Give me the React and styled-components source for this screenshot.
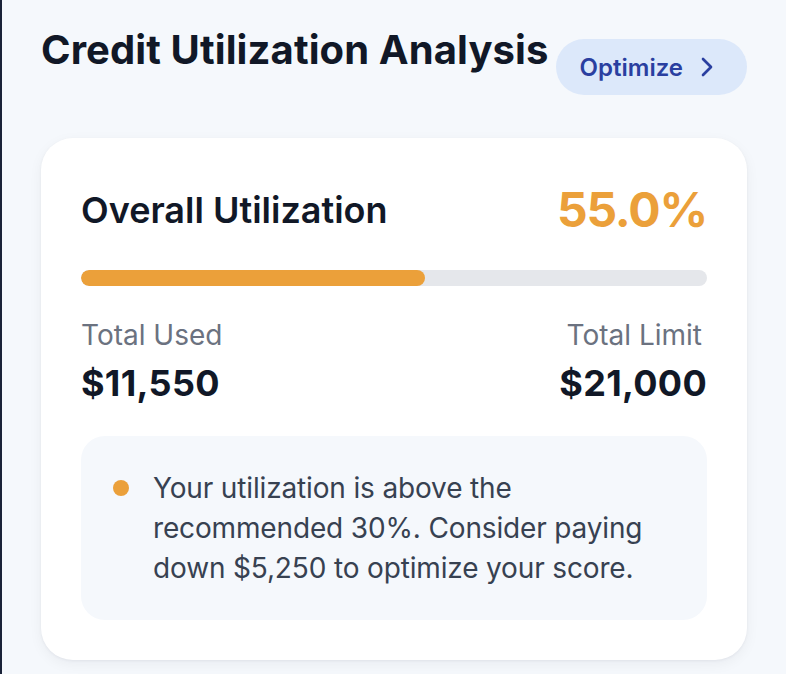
import React from "react";
import styled, { createGlobalStyle } from "styled-components";
import { ChevronRight } from "lucide-react";

const GlobalStyle = createGlobalStyle`
  html, body {
    margin: 0;
    padding: 0;
    background: #f5f8fc;
  }
  body {
    font-family: Inter, "Noto Sans", sans-serif;
    color: #111827;
  }
`;

const Page = styled.div`
  min-height: 674px;
  box-sizing: border-box;
  border-left: 2px solid #1a2238;
  padding: 22px 39px 0 39px;
  background: #f5f8fc;
`;

const Header = styled.div`
  display: flex;
  justify-content: space-between;
  align-items: flex-start;
`;

const Title = styled.h2`
  margin: 0;
  font-size: 40px;
  line-height: 56px;
  font-weight: 700;
  color: #111827;
  letter-spacing: 0.1px;
`;

const OptimizeButton = styled.button`
  margin-top: 17px;
  display: flex;
  align-items: center;
  gap: 8px;
  height: 56px;
  padding: 0 24px;
  border: none;
  border-radius: 999px;
  background: #dce8fa;
  color: #2a3fa0;
  font-family: inherit;
  font-size: 24px;
  font-weight: 600;
  cursor: pointer;
`;

const Card = styled.div`
  margin-top: 43px;
  background: #ffffff;
  border-radius: 32px;
  padding: 40px;
  box-shadow: 0 1px 3px rgba(15, 23, 42, 0.05), 0 4px 14px rgba(15, 23, 42, 0.05);
`;

const CardTop = styled.div`
  display: flex;
  justify-content: space-between;
  align-items: center;
`;

const CardTitle = styled.h3`
  margin: 0;
  font-size: 36px;
  line-height: 56px;
  font-weight: 600;
  color: #111827;
`;

const Percent = styled.span`
  font-size: 48px;
  line-height: 64px;
  font-weight: 700;
  letter-spacing: -1.2px;
  color: ${(p) => p.color};
`;

const Track = styled.div`
  margin-top: 28px;
  height: 16px;
  border-radius: 999px;
  background: #e5e7eb;
  overflow: hidden;
`;

const Fill = styled.div`
  height: 100%;
  border-radius: 999px;
  background: #eba03a;
`;

const Totals = styled.div`
  margin-top: 29px;
  display: flex;
  justify-content: space-between;
`;

const Stat = styled.div`
  text-align: ${(p) => (p.right ? "right" : "left")};
`;

const StatLabel = styled.div`
  font-size: 28px;
  line-height: 40px;
  color: #6b7280;
  padding-right: ${(p) => (p.right ? "5px" : "0")};
`;

const StatValue = styled.div`
  font-size: 36px;
  line-height: 56px;
  font-weight: 700;
  letter-spacing: 0.3px;
  color: #111827;
`;

const Notice = styled.div`
  margin-top: 25px;
  display: flex;
  align-items: flex-start;
  gap: 24px;
  padding: 32px;
  border-radius: 24px;
  background: #f5f8fc;
`;

const Dot = styled.span`
  flex: none;
  width: 16px;
  height: 16px;
  margin-top: 12px;
  border-radius: 50%;
  background: #eba03a;
`;

const NoticeText = styled.p`
  margin: 0;
  font-size: 28px;
  line-height: 40px;
  letter-spacing: -0.15px;
  color: #374151;
`;

const used = 11550;
const limit = 21000;

export default function App() {
  const pct = (used / limit) * 100;
  const fmt = (n) => "$" + n.toLocaleString("en-US");

  return (
    <>
      <GlobalStyle />
      <Page>
        <Header>
          <Title>Credit Utilization Analysis</Title>
          <OptimizeButton>
            Optimize
            <ChevronRight size={32} strokeWidth={2} />
          </OptimizeButton>
        </Header>

        <Card>
          <CardTop>
            <CardTitle>Overall Utilization</CardTitle>
            <Percent color="#eba03a">{pct.toFixed(1)}%</Percent>
          </CardTop>
          <Track>
            <Fill style={{ width: `${pct}%` }} />
          </Track>
          <Totals>
            <Stat>
              <StatLabel>Total Used</StatLabel>
              <StatValue>{fmt(used)}</StatValue>
            </Stat>
            <Stat right>
              <StatLabel right>Total Limit</StatLabel>
              <StatValue>{fmt(limit)}</StatValue>
            </Stat>
          </Totals>
          <Notice>
            <Dot />
            <NoticeText>
              Your utilization is above the recommended 30%. Consider paying
              down $5,250 to optimize your score.
            </NoticeText>
          </Notice>
        </Card>
      </Page>
    </>
  );
}
